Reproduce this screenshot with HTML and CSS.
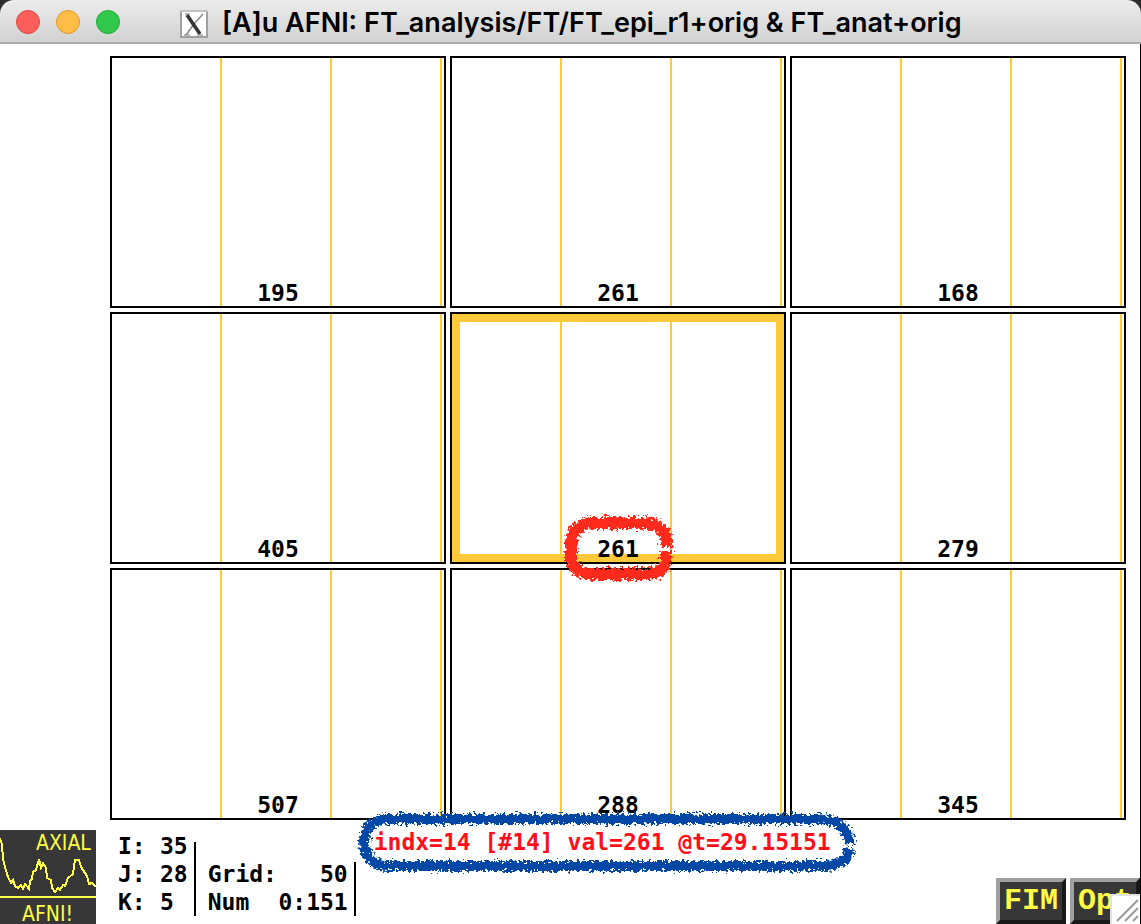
FILE: index.html
```html
<!DOCTYPE html>
<html lang="en">
<head>
<meta charset="utf-8">
<title>[A]u AFNI: FT_analysis/FT/FT_epi_r1+orig &amp; FT_anat+orig</title>
<link rel="stylesheet" href="styles.css">
</head>
<body>
<div class="window">
  <header class="titlebar">
    <div class="lights">
      <button class="light close" aria-label="Close"></button>
      <button class="light minimize" aria-label="Minimize"></button>
      <button class="light maximize" aria-label="Zoom"></button>
    </div>
    <svg class="app-icon" viewBox="0 0 28 28" aria-hidden="true">
      <rect x="1" y="1" width="26" height="26" fill="#fff" stroke="#a0a0a0" stroke-width="2"/>
      <rect x="0" y="0" width="28" height="2" fill="#c2c2c2"/>
      <path d="M23 4 14 14 6 25" stroke="#888" stroke-width="1.5" fill="none"/>
      <path d="M7 5 20 24" stroke="#333" stroke-width="3.5" fill="none"/>
      <path d="M4 25h6M17 25h6M5 4h5" stroke="#777" stroke-width="1"/>
    </svg>
    <h1 class="title">[A]u AFNI: FT_analysis/FT/FT_epi_r1+orig &amp; FT_anat+orig</h1>
  </header>

  <main class="content">
    <section class="graphs">
      <div class="graph">195</div>
      <div class="graph">261</div>
      <div class="graph">168</div>
      <div class="graph">405</div>
      <div class="graph selected">
        <span class="value">261
          <svg class="mark red-mark" viewBox="0 0 112 68" aria-hidden="true">
            <defs>
              <filter id="brush" filterUnits="userSpaceOnUse" x="-5" y="-5" width="520" height="80">
                <feTurbulence type="fractalNoise" baseFrequency="0.35" numOctaves="2" seed="4"/>
                <feDisplacementMap in="SourceGraphic" scale="11" xChannelSelector="R" yChannelSelector="G"/>
              </filter>
            </defs>
            <path filter="url(#brush)" d="M104 37V46Q102 59 86 60H28Q12 58 9 46V28Q12 11 28 9H84Q101 11 104 24V33"/>
          </svg>
        </span>
      </div>
      <div class="graph">279</div>
      <div class="graph">507</div>
      <div class="graph">288</div>
      <div class="graph">345</div>
    </section>

    <footer class="footer">
      <svg class="logo" viewBox="0 0 96 94" role="img" aria-label="AXIAL AFNI!">
        <rect width="96" height="94" fill="#373737"/>
        <path shape-rendering="crispEdges" d="M0 8 2 15 3 29 5 37 8 47 11 53 13 50 15 56 18 58 21 55 23 59 25 54 29 59 30 51 32 49 33 42 36 40 39 29 41 38 43 33 46 38 47 48 51 50 52 58 55 62 58 58 60 60 63 55 65 56 68 48 73 44 75 30 79 30 81 37 87 46 89 54 92 53 96 57" fill="none" stroke="#ffff45" stroke-width="2"/>
        <path d="M0 67H96" stroke="#ffff45" stroke-width="2"/>
        <text x="36" y="20">AXIAL</text>
        <text x="22" y="91">AFNI!</text>
      </svg>
      <dl class="coords">
        <dt>I:</dt><dd>35</dd>
        <dt>J:</dt><dd>28</dd>
        <dt>K:</dt><dd>5</dd>
      </dl>
      <dl class="params">
        <dt>Grid:</dt><dd>50</dd>
        <dt>Num</dt><dd>0:151</dd>
      </dl>
      <p class="status">indx=14 [#14] val=261 @t=29.15151
        <svg class="mark blue-mark" viewBox="0 0 500 64" aria-hidden="true">
          <path filter="url(#brush)" d="M493 37C491 48 484 54 468 55H30C14 54 8 44 7 32C8 18 14 9 30 8H462C482 9 491 17 493 33"/>
        </svg>
      </p>
      <div class="actions">
        <button class="action">FIM</button>
        <button class="action">Opt</button>
      </div>
    </footer>
  </main>

  <svg class="resize" viewBox="0 0 30 30" aria-hidden="true">
    <rect width="30" height="30" fill="#e2e2e2"/>
    <rect x="2" y="2" width="28" height="28" fill="#fff"/>
    <path d="M7 27 28 6M15 27 28 14M23 27 28 22" stroke="#999" stroke-width="2" fill="none"/>
  </svg>
</div>
</body>
</html>
```
FILE: styles.css
```css
* {
  box-sizing: border-box;
}

body {
  margin: 0;
  background: #2c2c2c;
  color: #000;
  font: bold 23px/28px "DejaVu Sans Mono", monospace;
}

.window {
  position: relative;
  display: flex;
  flex-direction: column;
  height: 100vh;
  overflow: hidden;
}

.titlebar {
  display: flex;
  align-items: center;
  height: 44px;
  padding: 2px 16px 0;
  flex: none;
  background: linear-gradient(#ececec, #d2d2d2);
  border-bottom: 2px solid #acacac;
  border-radius: 14px 14px 0 0;
}

.lights {
  display: flex;
  gap: 16px;
}

.light {
  width: 24px;
  height: 24px;
  padding: 0;
  border: 1px solid;
  border-radius: 50%;
}

.close {
  background: #ff5f5a;
  border-color: #e0443f;
}

.minimize {
  background: #ffbd45;
  border-color: #dd9a30;
}

.maximize {
  background: #31c84c;
  border-color: #1faa34;
}

.app-icon {
  width: 28px;
  height: 28px;
  margin: 4px 14px 0 60px;
}

.title {
  margin: 0;
  padding-top: 2px;
  font: 600 27px/32px Inter, sans-serif;
  white-space: nowrap;
}

.content {
  display: flex;
  flex-direction: column;
  flex: 1;
  min-height: 0;
  padding-top: 12px;
  background: #fff;
  border-right: 1px solid #000;
}

.graphs {
  display: grid;
  grid-template: repeat(3, 1fr) / repeat(3, 1fr);
  gap: 4px;
  flex: 1;
  margin: 0 14px 0 110px;
}

.graph {
  display: flex;
  align-items: flex-end;
  justify-content: center;
  border: 2px solid #000;
  background: repeating-linear-gradient(to right, transparent 0 108px, #ffca3a 108px 110px);
  line-height: 26px;
}

.selected {
  box-shadow: inset 0 0 0 8px #ffca3a;
}

.value {
  position: relative;
}

.mark {
  position: absolute;
  overflow: visible;
  fill: none;
}

.red-mark {
  top: -22px;
  left: -35px;
  width: 112px;
  height: 68px;
  stroke: #ff2c1c;
  stroke-width: 12px;
}

.blue-mark {
  top: -17px;
  left: -17px;
  width: 500px;
  height: 64px;
  stroke: #0347a6;
  stroke-width: 10px;
}

.footer {
  display: flex;
  height: 104px;
  flex: none;
}

.logo {
  width: 96px;
  height: 94px;
  margin-top: 10px;
  fill: #ffff45;
  font: 21px "DejaVu Sans Condensed", "DejaVu Sans", sans-serif;
}

.coords,
.params {
  display: grid;
  align-self: flex-end;
  margin: 0;
  border-right: 2px solid #000;
}

.coords {
  grid-template-columns: 42px 1fr;
  height: 74px;
  align-content: end;
  margin: 0 0 8px 22px;
  padding-right: 6px;
}

.params {
  grid-template-columns: 1fr auto;
  width: 148px;
  height: 54px;
  align-content: end;
  margin: 0 0 8px 12px;
  padding-right: 6px;
}

dd {
  margin: 0;
  text-align: right;
}

.coords dd {
  text-align: left;
}

.status {
  position: relative;
  align-self: flex-start;
  margin: 8px 0 0 18px;
  color: #ff0f1b;
  white-space: nowrap;
}

.actions {
  display: flex;
  gap: 4px;
  align-self: flex-end;
  margin-left: auto;
}

.action {
  width: 70px;
  height: 46px;
  padding: 0;
  border: 4px solid;
  border-color: #a0a0a0 #191919 #191919 #a0a0a0;
  background: #373737;
  color: #ffff45;
  font: bold 30px/38px "Liberation Mono", monospace;
}

.resize {
  position: absolute;
  right: 1px;
  bottom: 0;
  width: 30px;
  height: 30px;
}
```
